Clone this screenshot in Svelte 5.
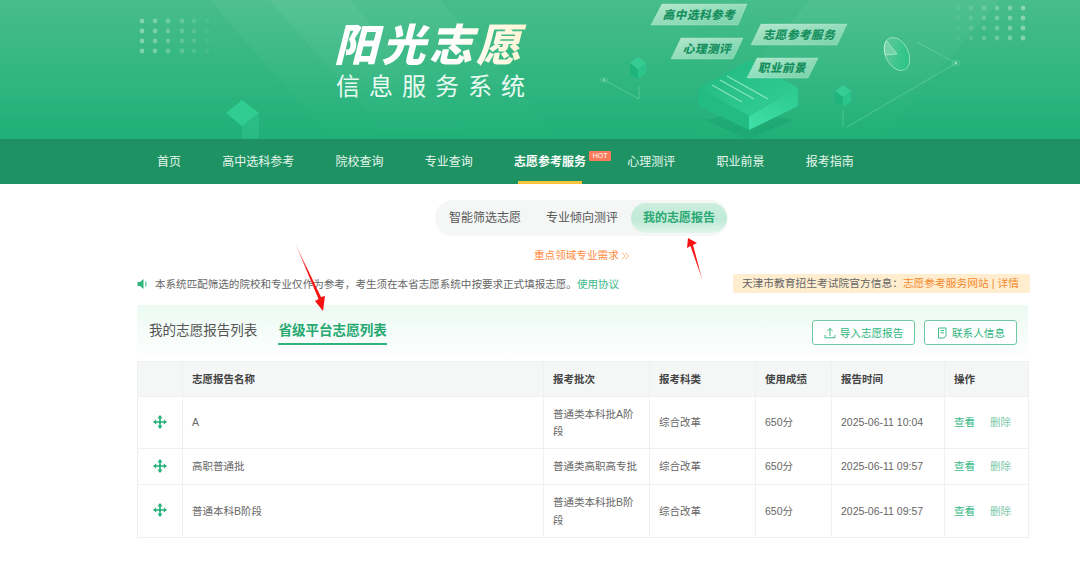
<script lang="ts">
  const navItems = ['首页', '高中选科参考', '院校查询', '专业查询', '志愿参考服务', '心理测评', '职业前景', '报考指南'];
  const subTabs = ['智能筛选志愿', '专业倾向测评', '我的志愿报告'];
  const columns = ['', '志愿报告名称', '报考批次', '报考科类', '使用成绩', '报告时间', '操作'];

  const reports = [
    { name: 'A', batch: '普通类本科批A阶段', kind: '综合改革', score: '650分', time: '2025-06-11 10:04' },
    { name: '高职普通批', batch: '普通类高职高专批', kind: '综合改革', score: '650分', time: '2025-06-11 09:57' },
    { name: '普通本科B阶段', batch: '普通类本科批B阶段', kind: '综合改革', score: '650分', time: '2025-06-11 09:57' }
  ];

  const dotRows = [21, 31, 41, 51];
  const leftDots = [142, 155, 168, 182, 194, 207];
  const rightDots = [958, 971, 984, 997, 1010, 1023];
  const rightDotRows = [8, 18, 28, 38];

  const cards = [
    { pts: '662,4 747,4 738,25 651,25', x: 699, y: 19, label: '高中选科参考' },
    { pts: '761,24 847,24 837,45 751,45', x: 799, y: 39, label: '志愿参考服务' },
    { pts: '681,38 743,38 733,59 671,59', x: 707, y: 53, label: '心理测评' },
    { pts: '757,58 818,58 808,78 747,78', x: 782, y: 72, label: '职业前景' }
  ];

  const cubes = [
    { cx: 638, top: 57 },
    { cx: 843, top: 85 }
  ];
</script>

<div class="page">
  <header class="banner">
    <svg class="banner-art" viewBox="0 0 1080 139" width="1080" height="139" aria-hidden="true">
      <defs>
        <linearGradient id="sheen" x1="0" y1="0" x2="0" y2="1">
          <stop offset="0" stop-color="#fff" stop-opacity="0.05" />
          <stop offset="1" stop-color="#fff" stop-opacity="0" />
        </linearGradient>
        <linearGradient id="cardFill" x1="0" y1="0" x2="1" y2="1">
          <stop offset="0" stop-color="#c9f0dc" stop-opacity="0.85" />
          <stop offset="1" stop-color="#9fe3c2" stop-opacity="0.6" />
        </linearGradient>
        <linearGradient id="bookTop" x1="0" y1="0" x2="1" y2="1">
          <stop offset="0" stop-color="#20b67e" />
          <stop offset="1" stop-color="#33d198" />
        </linearGradient>
        <linearGradient id="bookRight" x1="0" y1="1" x2="1" y2="0">
          <stop offset="0" stop-color="#3fe0a8" />
          <stop offset="1" stop-color="#2cc98f" />
        </linearGradient>
        <linearGradient id="cubeFade" x1="0" y1="0" x2="0" y2="1">
          <stop offset="0" stop-color="#22b47c" />
          <stop offset="1" stop-color="#1fb077" stop-opacity="0.2" />
        </linearGradient>
        <linearGradient id="cubeFadeLight" x1="0" y1="0" x2="0" y2="1">
          <stop offset="0" stop-color="#28bc84" />
          <stop offset="1" stop-color="#30c48c" stop-opacity="0.45" />
        </linearGradient>
        <linearGradient id="pieFill" x1="0" y1="0" x2="1" y2="1">
          <stop offset="0" stop-color="#8fdcb8" stop-opacity="0.25" />
          <stop offset="0.55" stop-color="#3ccb92" stop-opacity="0.7" />
          <stop offset="1" stop-color="#1fc082" />
        </linearGradient>
      </defs>

      <polygon points="210,0 330,139 470,139 350,0" fill="url(#sheen)" />
      <polygon points="270,0 390,139 560,139 440,0" fill="url(#sheen)" />
      <polygon points="810,0 690,139 880,139 1000,0" fill="url(#sheen)" />

      {#each dotRows as y}
        {#each leftDots as x, i}
          <circle cx={x} cy={y} r="2.4" fill="#fff" opacity={0.36 - i * 0.06} />
        {/each}
      {/each}
      {#each rightDotRows as y}
        {#each rightDots as x, i}
          <circle cx={x} cy={y} r="2.4" fill="#fff" opacity={0.06 + i * 0.06} />
        {/each}
      {/each}

      <!-- left cube -->
      <polygon points="226,113 242,125 242,139 226,139" fill="url(#cubeFade)" />
      <polygon points="259,113 242,125 242,139 259,139" fill="url(#cubeFadeLight)" />
      <polygon points="242,100 259,113 242,126 226,113" fill="#31cc90" />

      <!-- thin network lines -->
      <g fill="none" stroke="#9fe8c6" stroke-opacity="0.4" stroke-width="0.8">
        <polyline points="604,80 639,99 639,86" />
        <polyline points="847,127 956,63 917,42" />
        <line x1="843" y1="110" x2="843" y2="127" />
        <ellipse cx="604" cy="80" rx="3.5" ry="2.2" />
        <ellipse cx="956" cy="63" rx="4" ry="2.5" />
      </g>
      <circle cx="956" cy="63" r="1.2" fill="#c8f3dd" opacity="0.7" />
      <circle cx="604" cy="80" r="1" fill="#c8f3dd" opacity="0.7" />

      <!-- book platform -->
      <polygon points="705,120 748,111 793,120 748,139" fill="#1aa26d" opacity="0.5" />
      <polygon points="699,88 749,116 749,130 699,106" fill="#22bb82" />
      <polygon points="798,88 749,116 749,130 798,106" fill="url(#bookRight)" />
      <polygon points="699,88 750,60 798,88 749,116" fill="url(#bookTop)" />
      <g stroke="#a8efcc" stroke-width="1.2" stroke-opacity="0.75">
        <line x1="712" y1="85" x2="742" y2="102" />
        <line x1="720" y1="80" x2="754" y2="99" />
        <line x1="727" y1="76" x2="768" y2="99" />
      </g>

      {#each cubes as c}
        <polygon points="{c.cx - 8},{c.top + 6} {c.cx},{c.top + 12} {c.cx},{c.top + 22} {c.cx - 8},{c.top + 17}" fill="#1fb47c" />
        <polygon points="{c.cx + 8},{c.top + 6} {c.cx},{c.top + 12} {c.cx},{c.top + 22} {c.cx + 8},{c.top + 17}" fill="#2bc48b" />
        <polygon points="{c.cx},{c.top} {c.cx + 8},{c.top + 6} {c.cx},{c.top + 12} {c.cx - 8},{c.top + 6}" fill="#35cd94" />
      {/each}

      <!-- pie chart -->
      <g transform="rotate(-25 897 54)">
        <ellipse cx="897" cy="54" rx="11.5" ry="17.5" fill="url(#pieFill)" stroke="#c5f1da" stroke-opacity="0.7" stroke-width="0.8" />
        <path d="M897 54 L886 50 A11.5 17.5 0 0 1 893 37.5 Z" fill="#c5f1da" fill-opacity="0.3" stroke="#d8f7e7" stroke-opacity="0.7" stroke-width="0.7" />
      </g>

      {#each cards as card}
        <polygon points={card.pts} fill="url(#cardFill)" stroke="#d6f6e6" stroke-opacity="0.5" stroke-width="0.6" />
        <text class="card-label" x={card.x} y={card.y} text-anchor="middle">{card.label}</text>
      {/each}
    </svg>

    <div class="brand">
      <h1>阳光志愿</h1>
      <p>信息服务系统</p>
    </div>
  </header>

  <nav class="nav">
    {#each navItems as item, i}
      <span class="nav-item" class:active={i === 4}>
        {item}
        {#if i === 4}<em class="hot">HOT</em>{/if}
      </span>
    {/each}
  </nav>

  <main class="content">
    <div class="sub-tabs">
      {#each subTabs as tab, i}
        <span class="sub-tab" class:active={i === 2}>{tab}</span>
      {/each}
    </div>

    <div class="focus-link">
      重点领域专业需求
      <svg viewBox="0 0 9 8" width="9" height="8" aria-hidden="true">
        <path d="M1 0.5 L4 4 L1 7.5 M4.5 0.5 L7.5 4 L4.5 7.5" fill="none" stroke="#ffa76b" stroke-width="0.8" />
      </svg>
    </div>

    <div class="notice-row">
      <div class="notice">
        <svg viewBox="0 0 12 12" width="12" height="12" aria-hidden="true">
          <path d="M0.5 4 H3 L6.5 1 V11 L3 8 H0.5 Z" fill="#2fb47d" />
          <path d="M8 2.5 A4.2 4.2 0 0 1 8 9.5 Z" fill="#7fd3ad" />
        </svg>
        <span>本系统匹配筛选的院校和专业仅作为参考，考生须在本省志愿系统中按要求正式填报志愿。<a href="#top">使用协议</a></span>
      </div>
      <div class="official">
        天津市教育招生考试院官方信息：<b>志愿参考服务网站 | 详情</b>
      </div>
    </div>

    <section class="panel">
      <div class="panel-head">
        <div class="list-tabs">
          <span class="list-tab">我的志愿报告列表</span>
          <span class="list-tab active">省级平台志愿列表</span>
        </div>
        <div class="actions">
          <button class="outline import">
            <svg viewBox="0 0 12 12" width="12" height="12" aria-hidden="true">
              <path d="M6 9 V1.5 M3.4 4 L6 1.5 L8.6 4 M1 8 V10.8 H11 V8" fill="none" stroke="#2fb47d" stroke-width="0.9" />
            </svg>
            导入志愿报告
          </button>
          <button class="outline contact">
            <svg viewBox="0 0 12 12" width="12" height="12" aria-hidden="true">
              <path d="M2.5 1 H10 V9 L8 11 H2.5 Z M4.5 3.5 H8 M4.5 5.8 H8" fill="none" stroke="#2fb47d" stroke-width="0.9" />
            </svg>
            联系人信息
          </button>
        </div>
      </div>

      <table>
        <colgroup>
          <col class="c-drag" />
          <col class="c-name" />
          <col class="c-batch" />
          <col class="c-kind" />
          <col class="c-score" />
          <col class="c-time" />
          <col class="c-ops" />
        </colgroup>
        <thead>
          <tr>
            {#each columns as col}
              <th>{col}</th>
            {/each}
          </tr>
        </thead>
        <tbody>
          {#each reports as row}
            <tr>
              <td class="drag">
                <svg viewBox="0 0 14 14" width="14" height="14" aria-hidden="true">
                  <path d="M7 1.5 V12.5 M1.5 7 H12.5" stroke="#22b078" stroke-width="1.7" />
                  <path d="M7 0 L9.6 3.2 H4.4 Z M7 14 L9.6 10.8 H4.4 Z M0 7 L3.2 4.4 V9.6 Z M14 7 L10.8 4.4 V9.6 Z" fill="#22b078" />
                </svg>
              </td>
              <td>{row.name}</td>
              <td>{row.batch}</td>
              <td>{row.kind}</td>
              <td>{row.score}</td>
              <td>{row.time}</td>
              <td class="ops"><a href="#top">查看</a><a href="#top" class="del">删除</a></td>
            </tr>
          {/each}
        </tbody>
      </table>
    </section>
  </main>

  <svg class="annotations" viewBox="0 0 1080 561" width="1080" height="561" aria-hidden="true">
    <defs>
      <linearGradient id="arrowA" gradientUnits="userSpaceOnUse" x1="295" y1="243" x2="323" y2="311">
        <stop offset="0" stop-color="#ff5a5a" stop-opacity="0.5" />
        <stop offset="0.4" stop-color="#f91d1d" />
        <stop offset="1" stop-color="#f50f0f" />
      </linearGradient>
      <linearGradient id="arrowB" gradientUnits="userSpaceOnUse" x1="703" y1="282" x2="688" y2="238">
        <stop offset="0" stop-color="#ff5a5a" stop-opacity="0.5" />
        <stop offset="0.4" stop-color="#f91d1d" />
        <stop offset="1" stop-color="#f50f0f" />
      </linearGradient>
    </defs>
    <polygon points="295,243 321,297 325,296 323,311 315,301 318.5,299" fill="url(#arrowA)" />
    <polygon points="703,282 693,245 697,243 688,238 687,248 690.5,246" fill="url(#arrowB)" />
  </svg>
</div>

<style>
  :global(body) {
    margin: 0;
    background: #fff;
    font-family: 'Liberation Sans', 'Noto Sans CJK SC', sans-serif;
  }

  .page {
    position: relative;
    width: 1080px;
    height: 561px;
    overflow: hidden;
  }

  .banner {
    position: relative;
    height: 139px;
    box-sizing: border-box;
    padding: 22px 0 0 334px;
    background: linear-gradient(180deg, #47bd8b 0%, #1fb077 100%);
  }

  .banner-art {
    position: absolute;
    left: 0;
    top: 0;
  }

  .card-label {
    font-family: 'Noto Sans CJK SC', sans-serif;
    font-size: 11.5px;
    font-weight: 900;
    font-style: italic;
    letter-spacing: 0.6px;
    fill: #17905f;
  }

  .brand {
    position: relative;
    color: #fff;
  }

  .brand h1 {
    margin: 0;
    width: 200px;
    font-size: 44px;
    line-height: 48px;
    font-weight: 900;
    font-style: italic;
    letter-spacing: 3.4px;
    white-space: nowrap;
    background: linear-gradient(90deg, #fff 0%, #fff 55%, #fff3cf 100%);
    -webkit-background-clip: text;
    background-clip: text;
    color: transparent;
  }

  .brand p {
    margin: 1px 0 0 2px;
    font-size: 24px;
    line-height: 32px;
    font-weight: 400;
    letter-spacing: 9px;
    white-space: nowrap;
    color: #eafaf2;
  }

  .nav {
    display: flex;
    gap: 41.25px;
    height: 45px;
    padding-left: 157px;
    background: #1f9263;
  }

  .nav-item {
    position: relative;
    font-size: 12px;
    line-height: 46px;
    color: #e6f6ee;
    white-space: nowrap;
  }

  .nav-item.active {
    color: #fff;
    font-weight: 700;
  }

  .nav-item.active::after {
    content: '';
    position: absolute;
    left: 4px;
    right: 4px;
    bottom: 0;
    height: 3px;
    background: #f8c33c;
  }

  .hot {
    position: absolute;
    left: 75px;
    top: 12px;
    width: 22px;
    height: 10px;
    font-size: 7px;
    font-style: normal;
    font-weight: 400;
    line-height: 10px;
    text-align: center;
    color: #fff;
    background: #fb7a5c;
    border-radius: 1px;
  }

  .content {
    display: flex;
    flex-direction: column;
    padding: 16px 52px 0 137px;
  }

  .sub-tabs {
    display: flex;
    gap: 1px;
    align-self: flex-start;
    margin-left: 298px;
    height: 36px;
    box-sizing: border-box;
    padding: 3px 1px 3px 2px;
    border-radius: 18px;
    background: #f5f7f7;
  }

  .sub-tab {
    padding: 0 12px;
    font-size: 12px;
    line-height: 30px;
    color: #555;
    white-space: nowrap;
  }

  .sub-tab.active {
    color: #2aa873;
    font-weight: 700;
    border-radius: 15px;
    background: linear-gradient(180deg, #cdeee0 0%, #bfe9d6 55%, #e1f5ec 100%);
  }

  .focus-link {
    display: flex;
    align-items: center;
    gap: 2px;
    margin: 12px 0 0 397px;
    font-size: 10.6px;
    line-height: 15px;
    color: #ff8a3d;
    white-space: nowrap;
  }

  .notice-row {
    display: flex;
    align-items: center;
    justify-content: space-between;
    margin: 11px -2px 0 0;
    height: 19px;
  }

  .notice {
    display: flex;
    align-items: center;
    gap: 6px;
    font-size: 10.55px;
    color: #666;
    white-space: nowrap;
  }

  .notice a {
    color: #3cb98a;
    text-decoration: none;
  }

  .official {
    height: 19px;
    box-sizing: border-box;
    padding: 0 11px 0 9px;
    font-size: 10.74px;
    line-height: 19px;
    color: #666;
    white-space: nowrap;
    background: #ffedcf;
    border-radius: 2px;
  }

  .official b {
    font-weight: 400;
    color: #f58a2d;
  }

  .panel {
    margin-top: 12px;
    border-radius: 2px;
    background: linear-gradient(180deg, #ecfaf3 0px, #fff 56px);
  }

  .panel-head {
    display: flex;
    align-items: flex-end;
    justify-content: space-between;
    height: 56px;
    padding: 0 11px 0 12px;
    box-sizing: border-box;
  }

  .list-tabs {
    display: flex;
    align-items: flex-end;
    gap: 21px;
    margin-bottom: 16px;
  }

  .list-tab {
    height: 29px;
    box-sizing: border-box;
    font-size: 13.55px;
    line-height: 29px;
    color: #555;
    white-space: nowrap;
  }

  .list-tab.active {
    color: #26a871;
    font-weight: 700;
    border-bottom: 2px solid #2fb47d;
  }

  .actions {
    display: flex;
    gap: 9px;
    margin-bottom: 16px;
  }

  .outline {
    display: flex;
    align-items: center;
    justify-content: center;
    gap: 4px;
    height: 25px;
    padding: 0;
    font-family: inherit;
    font-size: 10.6px;
    color: #2fb47d;
    background: #fff;
    border: 1px solid #6fcaa3;
    border-radius: 3px;
  }

  .import {
    width: 103px;
  }

  .contact {
    width: 93px;
  }

  table {
    width: 891px;
    table-layout: fixed;
    border-collapse: collapse;
    font-size: 10.5px;
    color: #666;
  }

  .c-drag { width: 45px; }
  .c-name { width: 361px; }
  .c-batch { width: 106px; }
  .c-kind { width: 106px; }
  .c-score { width: 76px; }
  .c-time { width: 113px; }
  .c-ops { width: 84px; }

  th,
  td {
    box-sizing: border-box;
    padding: 1px 9px 0;
    border: 1px solid #eff1f1;
    text-align: left;
    line-height: 17.5px;
  }

  th {
    height: 35px;
    color: #444;
    font-weight: 700;
    background: #f5f7f7;
  }

  tbody tr:nth-child(1) td {
    height: 52px;
  }

  tbody tr:nth-child(2) td {
    height: 36px;
  }

  tbody tr:nth-child(3) td {
    height: 53px;
  }

  .drag {
    padding: 0;
    text-align: center;
  }

  .drag svg {
    display: block;
    margin: -2px auto 0;
  }

  .ops a {
    color: #3cb98a;
    text-decoration: none;
  }

  .ops .del {
    margin-left: 15px;
    color: #7ccbaa;
  }

  .annotations {
    position: absolute;
    left: 0;
    top: 0;
    pointer-events: none;
  }
</style>
